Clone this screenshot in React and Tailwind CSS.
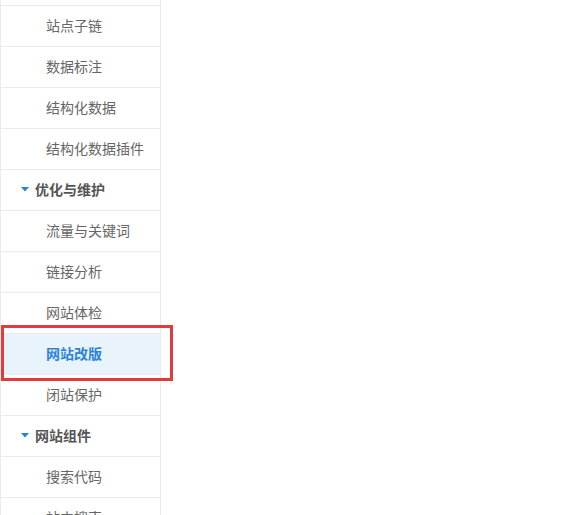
import React from 'react';

// 侧边栏菜单数据
const menu = [
  { type: 'item', label: '站点子链' },
  { type: 'item', label: '数据标注' },
  { type: 'item', label: '结构化数据' },
  { type: 'item', label: '结构化数据插件' },
  { type: 'group', label: '优化与维护' },
  { type: 'item', label: '流量与关键词' },
  { type: 'item', label: '链接分析' },
  { type: 'item', label: '网站体检' },
  { type: 'item', label: '网站改版', active: true },
  { type: 'item', label: '闭站保护' },
  { type: 'group', label: '网站组件' },
  { type: 'item', label: '搜索代码' },
  { type: 'item', label: '站内搜索' },
];

function Caret() {
  return (
    <svg width="8" height="5" viewBox="0 0 8 5" className="mr-[6px] shrink-0">
      <path d="M0 0 H8 L4 4.5 Z" fill="#2d7fd3" />
    </svg>
  );
}

function Row({ item }) {
  if (item.type === 'group') {
    return (
      <div className="h-[41px] border-b border-[#ebebeb] flex items-center pl-[20px] pb-[2px] text-[14px] font-bold text-[#555]">
        <Caret />
        <span>{item.label}</span>
      </div>
    );
  }
  if (item.active) {
    return (
      <div className="relative h-[41px] border-b border-[#ebebeb] bg-[#e8f3fc] flex items-center pl-[45px] pb-[2px] text-[14px] font-bold text-[#2a83d8]">
        <span>{item.label}</span>
        {/* 红色标注框 */}
        <div className="absolute left-0 top-[-9px] w-[172px] h-[56px] border-[3px] border-[#e23b3b] pointer-events-none" />
      </div>
    );
  }
  return (
    <div className="h-[41px] border-b border-[#ebebeb] flex items-center pl-[45px] pb-[2px] text-[14px] text-[#666]">
      <span>{item.label}</span>
    </div>
  );
}

export default function App() {
  return (
    <div
      className="w-[584px] h-[515px] overflow-hidden bg-white"
      style={{ fontFamily: '"Noto Sans CJK SC", "Noto Sans", sans-serif' }}
    >
      <div className="w-[161px] border-l border-r border-[#ebebeb] h-full">
        <div className="h-[6px] border-b border-[#ebebeb]" />
        {menu.map(item => (
          <Row key={item.label} item={item} />
        ))}
      </div>
    </div>
  );
}
